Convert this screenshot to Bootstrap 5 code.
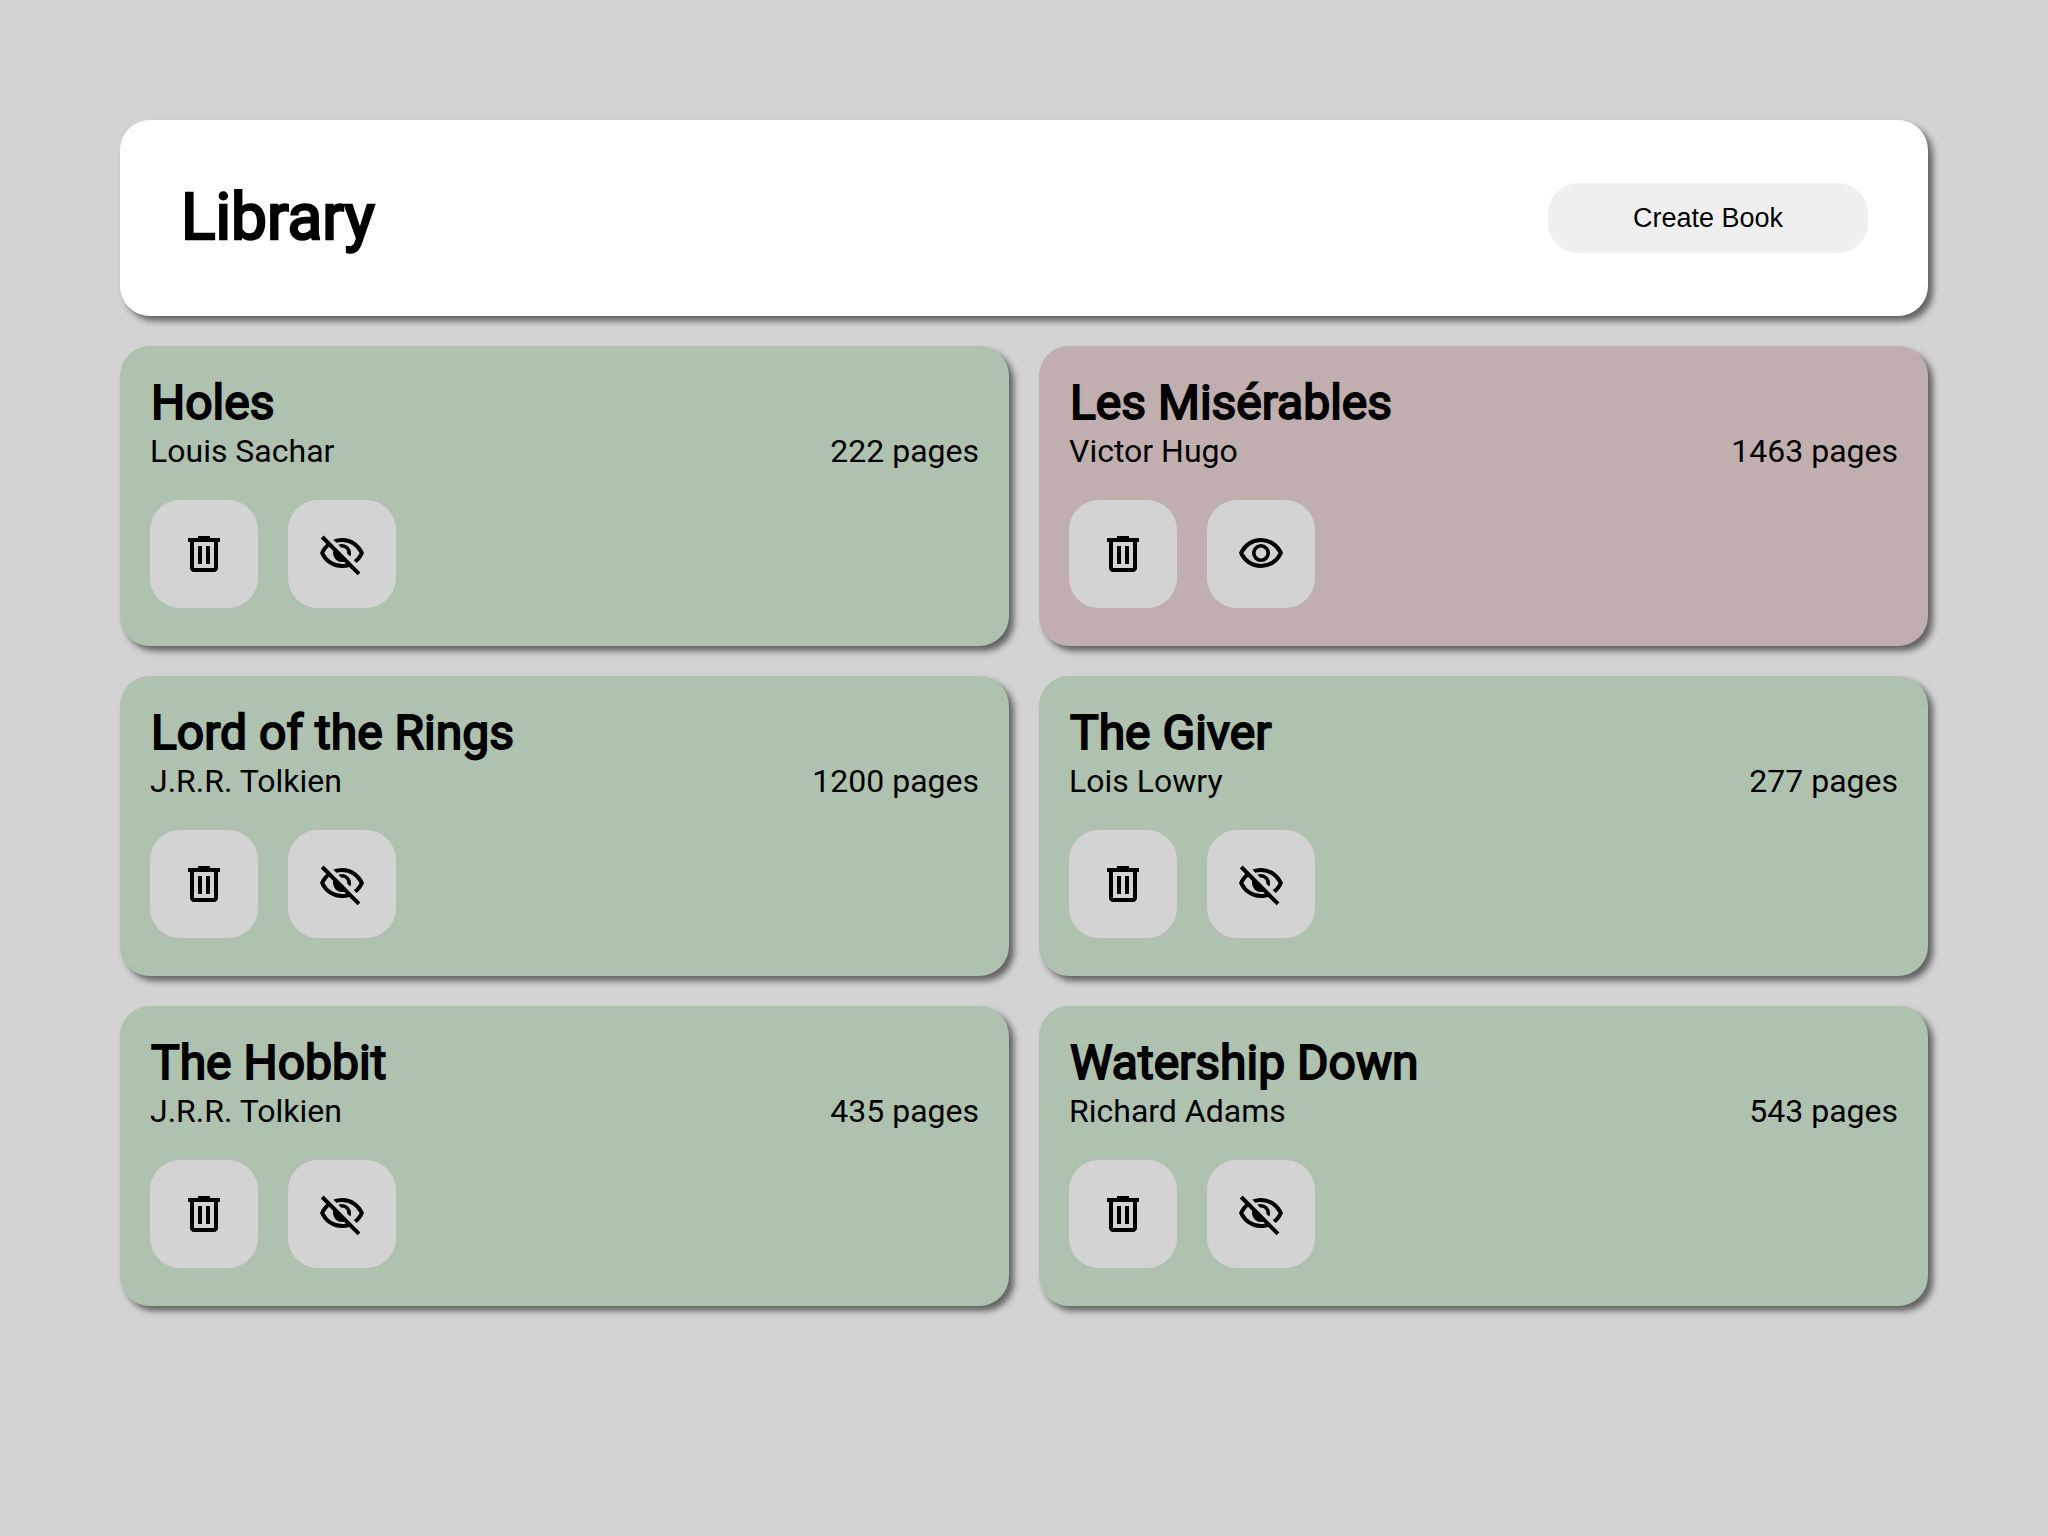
<!DOCTYPE html>
<html lang="en">
<head>
<meta charset="utf-8">
<meta name="viewport" content="width=device-width, initial-scale=1">
<title>Library</title>
<link rel="stylesheet" href="https://cdn.jsdelivr.net/npm/bootstrap@5.3.0/dist/css/bootstrap.min.css">
<style>
  body { background: #d3d3d3; color: #000; font: 400 32px/38px Roboto, sans-serif; }
  .page-wrap { padding: 120px; gap: 30px; }
  .panel { border-radius: 30px; box-shadow: 5px 5px 6px #00000088; }
  .top-panel { background: #fff; padding: 60px; }
  .strong-title { font-weight: 400; -webkit-text-stroke: 0.04em #000; padding-left: 1px; }
  h1.strong-title { font-size: 64px; line-height: 76px; }
  h2.strong-title { font-size: 48px; line-height: 54px; padding-bottom: 2px; }
  .create-btn { width: 320px; height: 70px; border: 0; border-radius: 30px; background: #efefef; color: #000; font: 27px "Liberation Sans", sans-serif; }
  .books { --bs-gutter-x: 30px; --bs-gutter-y: 30px; }
  .book { background: #c1afaf; padding: 30px 30px 38px; }
  .book.is-read { background: #afc1af; }
  .book-actions { gap: 30px; margin-top: 30px; }
  .tool-btn { padding: 30px; border: 0; border-radius: 30px; background: #d3d3d3; color: #000; }
  .tool-btn svg { display: block; width: 48px; height: 48px; fill: currentColor; }
</style>
</head>
<body>
<svg class="d-none" aria-hidden="true">
  <symbol id="trash" viewBox="0 0 24 24"><path d="M7 21q-.825 0-1.412-.587T5 19V6H4V4h5V3h6v1h5v2h-1v13q0 .825-.587 1.413T17 21zM17 6H7v13h10zM9 17h2V8H9zm4 0h2V8h-2z"/></symbol>
  <symbol id="eye" viewBox="0 0 24 24"><path d="M12 16q1.875 0 3.188-1.312T16.5 11.5t-1.312-3.187T12 7T8.813 8.313T7.5 11.5t1.313 3.188T12 16m0-1.8q-1.125 0-1.912-.788T9.3 11.5t.788-1.912T12 8.8t1.913.788t.787 1.912t-.787 1.913T12 14.2m0 4.8q-3.65 0-6.65-2.037T1 11.5q1.35-3.425 4.35-5.462T12 4t6.65 2.038T23 11.5q-1.35 3.425-4.35 5.463T12 19m0-2q2.825 0 5.188-1.487T20.8 11.5q-1.25-2.525-3.613-4.012T12 6T6.813 7.488T3.2 11.5q1.25 2.525 3.613 4.013T12 17"/></symbol>
  <symbol id="eye-off" viewBox="0 0 24 24"><path d="m16.1 13.3-1.45-1.45q.225-1.175-.675-2.2t-2.325-.8L10.2 7.4q.425-.2.862-.3T12 7q1.875 0 3.188 1.313T16.5 11.5q0 .5-.1.938t-.3.862m3.2 3.15-1.45-1.4q.95-.725 1.688-1.588T20.8 11.5q-1.25-2.525-3.588-4.013T12 6q-.725 0-1.425.1T9.2 6.4L7.65 4.85q1.025-.425 2.1-.638T12 4q3.775 0 6.725 2.088T23 11.5q-.575 1.475-1.513 2.738T19.3 16.45m.5 6.15-4.2-4.15q-.875.275-1.762.413T12 19q-3.775 0-6.725-2.087T1 11.5q.525-1.325 1.325-2.463T4.15 7L1.4 4.2l1.4-1.4 18.4 18.4zM5.55 8.4q-.725.65-1.325 1.425T3.2 11.5q1.25 2.525 3.588 4.013T12 17q.5 0 .975-.062T13.95 16.8l-.9-.95q-.275.075-.525.113T12 16q-1.875 0-3.188-1.312T7.5 11.5q0-.275.038-.525T7.65 10.45z"/></symbol>
</svg>
<div class="page-wrap d-flex flex-column">
  <header class="panel top-panel d-flex justify-content-between align-items-center">
    <h1 class="strong-title m-0">Library</h1>
    <button type="button" class="create-btn">Create Book</button>
  </header>
  <main class="row row-cols-2 books">
    <div class="col"><article class="panel book is-read">
      <h2 class="strong-title m-0">Holes</h2>
      <div class="d-flex justify-content-between"><span>Louis Sachar</span><span>222 pages</span></div>
      <div class="book-actions d-flex"><button type="button" class="tool-btn" aria-label="Delete"><svg><use href="#trash"/></svg></button><button type="button" class="tool-btn" aria-label="Mark unread"><svg><use href="#eye-off"/></svg></button></div>
    </article></div>
    <div class="col"><article class="panel book">
      <h2 class="strong-title m-0">Les Misérables</h2>
      <div class="d-flex justify-content-between"><span>Victor Hugo</span><span>1463 pages</span></div>
      <div class="book-actions d-flex"><button type="button" class="tool-btn" aria-label="Delete"><svg><use href="#trash"/></svg></button><button type="button" class="tool-btn" aria-label="Mark read"><svg><use href="#eye"/></svg></button></div>
    </article></div>
    <div class="col"><article class="panel book is-read">
      <h2 class="strong-title m-0">Lord of the Rings</h2>
      <div class="d-flex justify-content-between"><span>J.R.R. Tolkien</span><span>1200 pages</span></div>
      <div class="book-actions d-flex"><button type="button" class="tool-btn" aria-label="Delete"><svg><use href="#trash"/></svg></button><button type="button" class="tool-btn" aria-label="Mark unread"><svg><use href="#eye-off"/></svg></button></div>
    </article></div>
    <div class="col"><article class="panel book is-read">
      <h2 class="strong-title m-0">The Giver</h2>
      <div class="d-flex justify-content-between"><span>Lois Lowry</span><span>277 pages</span></div>
      <div class="book-actions d-flex"><button type="button" class="tool-btn" aria-label="Delete"><svg><use href="#trash"/></svg></button><button type="button" class="tool-btn" aria-label="Mark unread"><svg><use href="#eye-off"/></svg></button></div>
    </article></div>
    <div class="col"><article class="panel book is-read">
      <h2 class="strong-title m-0">The Hobbit</h2>
      <div class="d-flex justify-content-between"><span>J.R.R. Tolkien</span><span>435 pages</span></div>
      <div class="book-actions d-flex"><button type="button" class="tool-btn" aria-label="Delete"><svg><use href="#trash"/></svg></button><button type="button" class="tool-btn" aria-label="Mark unread"><svg><use href="#eye-off"/></svg></button></div>
    </article></div>
    <div class="col"><article class="panel book is-read">
      <h2 class="strong-title m-0">Watership Down</h2>
      <div class="d-flex justify-content-between"><span>Richard Adams</span><span>543 pages</span></div>
      <div class="book-actions d-flex"><button type="button" class="tool-btn" aria-label="Delete"><svg><use href="#trash"/></svg></button><button type="button" class="tool-btn" aria-label="Mark unread"><svg><use href="#eye-off"/></svg></button></div>
    </article></div>
  </main>
</div>
<script src="https://cdn.jsdelivr.net/npm/bootstrap@5.3.0/dist/js/bootstrap.bundle.min.js"></script>
</body>
</html>
